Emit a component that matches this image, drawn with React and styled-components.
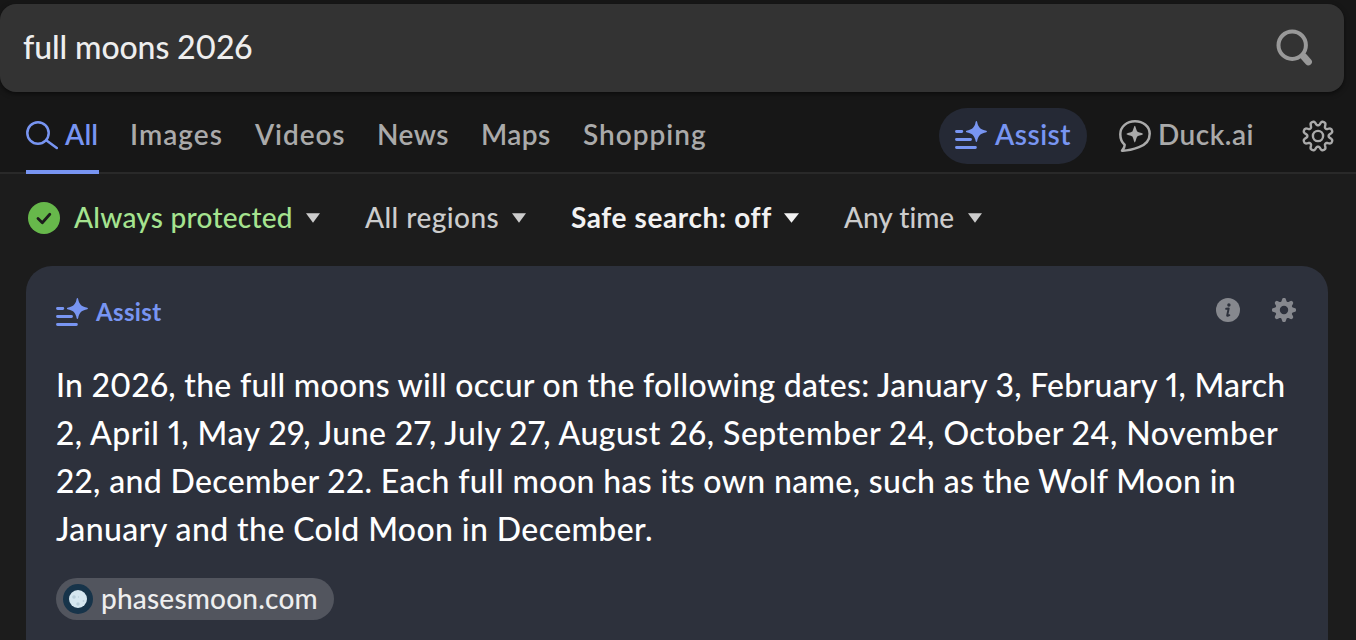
import React from 'react';
import styled, { createGlobalStyle } from 'styled-components';

const GlobalStyle = createGlobalStyle`
  *, *::before, *::after { box-sizing: border-box; }
  html, body { margin: 0; background: #1c1c1c; overflow: hidden; }
  body {
    font-family: Lato, 'Open Sans', sans-serif;
    color: #eee;
    font-kerning: normal;
    font-variant-ligatures: none;
    font-variant-numeric: proportional-nums;
  }
`;

const Page = styled.main`
  width: 1356px;
  height: 640px;
  overflow: hidden;
  display: flex;
  flex-direction: column;
  background: #1c1c1c;
`;

const Header = styled.header`
  flex: none;
  height: 174px;
  padding-top: 4px;
  background: #171717;
  border-bottom: 2px solid #292929;
`;

const SearchBar = styled.div`
  width: 1344px;
  height: 88px;
  padding: 0 30px 0 23px;
  display: flex;
  align-items: center;
  justify-content: space-between;
  background: #333;
  border-radius: 16px;
  box-shadow: 0 2px 5px rgba(0, 0, 0, 0.5);
`;

const Label = styled.span`
  flex: none;
  width: ${(p) => p.$width}px;
  white-space: nowrap;
  letter-spacing: ${(p) => p.$spacing || 0}px;
`;

const Query = styled(Label)`
  font-size: 32px;
  font-weight: 500;
  line-height: 40px;
  padding-bottom: 2px;
  color: #eee;
`;

const Nav = styled.nav`
  height: 82px;
  display: flex;
  justify-content: space-between;
  padding: 0 22px 0 26px;
  font-size: 28px;
  font-weight: 600;
  color: #aaa;
`;

const Tabs = styled.div`
  display: flex;
  gap: 32px;
`;

const Tab = styled.a`
  display: flex;
  align-items: center;
  gap: 7px;
  padding-top: 2px;
  margin-right: ${(p) => (p.$active ? '-1px' : '0')};
  color: ${(p) => (p.$active ? '#7895f2' : '#aaa')};
  box-shadow: ${(p) => (p.$active ? 'inset 0 -4px #7895f2' : 'none')};
`;

const Tools = styled.div`
  display: flex;
  align-items: center;
`;

const AssistPill = styled.div`
  width: 148px;
  height: 56px;
  margin: 6px 32px 0 0;
  padding: 0 15px 4px 16px;
  display: flex;
  align-items: center;
  gap: 8px;
  border-radius: 28px;
  color: #7895f2;
  background: #252935;
`;

const DuckLink = styled.div`
  display: flex;
  align-items: center;
  gap: 7px;
  padding-top: 2px;
  margin-right: 48px;
`;

const IconNudge = styled.span`
  display: flex;
  flex: none;
  margin-top: ${(p) => p.$top || 0}px;
  color: ${(p) => p.$color || 'inherit'};
`;

const Filters = styled.div`
  flex: none;
  height: 92px;
  padding: 0 28px 6px;
  display: flex;
  align-items: center;
  gap: 45px;
  font-size: 28px;
  font-weight: 500;
`;

const Filter = styled.div`
  display: flex;
  align-items: center;
  gap: 14px;
  color: ${(p) => p.$color};
  font-weight: ${(p) => p.$weight || 500};
`;

const Card = styled.section`
  flex: 1;
  width: 1302px;
  margin-left: 26px;
  padding: 28px 30px 0;
  border-radius: 26px 26px 0 0;
  background: #2d313c;
`;

const CardHeader = styled.div`
  height: 36px;
  display: flex;
  justify-content: space-between;
`;

const CardTitle = styled.div`
  display: flex;
  align-items: center;
  gap: 8px;
  color: #7895f2;
  font-size: 24px;
  font-weight: 700;
  line-height: 28px;
`;

const CardActions = styled.div`
  display: flex;
  gap: 32px;
  padding: 4px 2px 0 0;
`;

const Answer = styled.p`
  margin: 31px 0 25px;
  display: flex;
  flex-direction: column;
  font-size: 32px;
  font-weight: 500;
  line-height: 48px;
  color: #fff;
`;

const Source = styled.a`
  width: 278px;
  height: 42px;
  padding: 0 0 0 7px;
  display: flex;
  align-items: center;
  gap: 8px;
  border-radius: 21px;
  background: #52555e;
  color: #eee;
  font-size: 28px;
  font-weight: 500;
  line-height: 36px;
`;

const SourceLabel = styled(Label)`
  padding-bottom: 2px;
`;

function gearPath(c, mid, amp, sharp, phase) {
  const pts = [];
  for (let i = 0; i < 160; i++) {
    const a = (i / 160) * Math.PI * 2;
    const w = Math.tanh(sharp * (Math.cos(8 * a + phase) + 0.1)) / Math.tanh(sharp);
    const r = mid + amp * w;
    pts.push(`${(c + r * Math.cos(a)).toFixed(2)} ${(c + r * Math.sin(a)).toFixed(2)}`);
  }
  return `M${pts.join('L')}Z`;
}

const OutlineGear = () => (
  <svg width="32" height="32" fill="none" stroke="#aaa" strokeWidth="2.4" strokeLinejoin="round">
    <path d={gearPath(16, 12.8, 2.2, 1.7, Math.PI)} />
    <circle cx="16" cy="16" r="5.1" />
  </svg>
);

const SolidGear = () => (
  <svg width="24" height="24">
    <path fill="#86888e" fillRule="evenodd" d={gearPath(12, 10.3, 1.7, 1.3, 0) + 'M16.2 12a4.2 4.2 0 1 0-8.4 0a4.2 4.2 0 1 0 8.4 0Z'} />
  </svg>
);

const SearchIcon = () => (
  <svg width="38" height="38" fill="none" stroke="#999" strokeLinecap="round">
    <circle cx="16.2" cy="16.2" r="13.7" strokeWidth="4" />
    <path d="M28 27.9L32.4 32.8" strokeWidth="7" />
  </svg>
);

const SmallSearchIcon = () => (
  <svg width="32" height="30" fill="none" stroke="#7895f2" strokeWidth="2.5" strokeLinecap="round">
    <circle cx="12" cy="13" r="10.7" />
    <path d="M20.2 20.2L30.8 28" />
  </svg>
);

const AssistIcon = () => (
  <svg width="32" height="31" fill="none" stroke="#7895f2" strokeWidth="2.9" strokeLinecap="round">
    <path d="M1.5 11.5H6.8M1.5 19.5H15.5M1.5 27.5H20.4" />
    <path d="M21.4 1C22.1 1 22.2 2.2 22.5 3.5C23.7 7.5 25.5 9.2 29.4 10.3C31 10.7 31.9 10.9 31.9 11.5C31.9 12.1 31 12.3 29.4 12.7C25.5 13.8 23.7 15.5 22.5 19.5C22.2 20.8 22.1 22 21.4 22C20.7 22 20.6 20.8 20.3 19.5C19.1 15.5 17.3 13.8 13.4 12.7C11.8 12.3 10.9 12.1 10.9 11.5C10.9 10.9 11.8 10.7 13.4 10.3C17.3 9.2 19.1 7.5 20.3 3.5C20.6 2.2 20.7 1 21.4 1Z" fill="#7895f2" stroke="none" />
  </svg>
);

const DuckAiIcon = () => (
  <svg width="32" height="32" fill="none" stroke="#aaa" strokeWidth="2.5" strokeLinejoin="round">
    <path d="M16 1.3C24.2 1.3 30.7 6.5 30.7 13.8C30.7 20.2 26.5 24.8 20 27.2C14.4 29.4 7.2 30.8 3 30.7C2.6 30.2 6 28.5 5.6 24.8C2.7 22.2 1.3 18.5 1.3 14.3C1.3 6.5 8 1.3 16 1.3Z" />
    <path d="M15.8 5.7C16.5 5.7 16.9 8.8 18.2 11.6C19.4 12.6 24.2 13.3 24.2 14.1C24.2 14.9 19.4 15.6 18.2 16.6C16.9 19.4 16.5 22.5 15.8 22.5C15.1 22.5 14.7 19.4 13.4 16.6C12.2 15.6 7.4 14.9 7.4 14.1C7.4 13.3 12.2 12.6 13.4 11.6C14.7 8.8 15.1 5.7 15.8 5.7Z" fill="#aaa" stroke="none" />
  </svg>
);

const CheckIcon = () => (
  <svg width="32" height="32">
    <circle cx="16" cy="16" r="16" fill="#67b84b" />
    <path d="M10 16.5L14.3 20.7L21.8 12.3" fill="none" stroke="#1c1c1c" strokeWidth="2.8" strokeLinecap="round" strokeLinejoin="round" />
  </svg>
);

const Caret = ({ size = 14 }) => (
  <svg width={size} height="10" viewBox="0 0 14 10" preserveAspectRatio="none">
    <path d="M0 0.3H14L7 9.8Z" fill="currentColor" />
  </svg>
);

const InfoIcon = () => (
  <svg width="24" height="24">
    <circle cx="12" cy="12" r="12" fill="#86888e" />
    <circle cx="12.9" cy="7" r="1.7" fill="#2d313c" />
    <path d="M10.2 10.8L12.7 10.4L11.2 17.4Q11.1 18.2 13.3 17.2" fill="none" stroke="#2d313c" strokeWidth="2" strokeLinecap="round" strokeLinejoin="round" />
  </svg>
);

const MoonIcon = () => (
  <svg width="30" height="30">
    <circle cx="15" cy="15" r="15" fill="#17344a" />
    <circle cx="15" cy="15" r="9" fill="#d5e7f0" />
    <g fill="#b9cfdb">
      <circle cx="11" cy="13" r="1.8" />
      <circle cx="15" cy="20" r="1.7" />
      <circle cx="15.5" cy="13" r="0.7" />
      <circle cx="20.5" cy="17" r="0.9" />
    </g>
  </svg>
);

const tabs = [
  { text: 'Images', width: 93, spacing: 1.05 },
  { text: 'Videos', width: 90, spacing: 0.9 },
  { text: 'News', width: 72, spacing: 0.5 },
  { text: 'Maps', width: 70, spacing: 0.4 },
  { text: 'Shopping', width: 124, spacing: 1 },
];

const filters = [
  { text: 'All regions', width: 133, spacing: 0.45, color: '#ccc' },
  { text: 'Safe search: off', width: 199, spacing: 0.6, color: '#f2f2f2', weight: 700 },
  { text: 'Any time', width: 110, spacing: 0, color: '#ccc' },
];

const answer = [
  { text: 'In 2026, the full moons will occur on the following dates: January 3, February 1, March', width: 1229, spacing: 0.27 },
  { text: '2, April 1, May 29, June 27, July 27, August 26, September 24, October 24, November', width: 1221, spacing: 0.49 },
  { text: '22, and December 22. Each full moon has its own name, such as the Wolf Moon in', width: 1179, spacing: 0.36 },
  { text: 'January and the Cold Moon in December.', width: 596, spacing: 0.4 },
];

export default function App() {
  return (
    <Page>
      <GlobalStyle />
      <Header>
        <SearchBar>
          <Query $width={229} $spacing={-0.1}>full moons 2026</Query>
          <SearchIcon />
        </SearchBar>
        <Nav>
          <Tabs>
            <Tab $active>
              <IconNudge $top={2}><SmallSearchIcon /></IconNudge>
              <Label $width={34} $spacing={0.2}>All</Label>
            </Tab>
            {tabs.map((t) => (
              <Tab key={t.text}>
                <Label $width={t.width} $spacing={t.spacing}>{t.text}</Label>
              </Tab>
            ))}
          </Tabs>
          <Tools>
            <AssistPill>
              <IconNudge $top={2}><AssistIcon /></IconNudge>
              <Label $width={77} $spacing={0.5}>Assist</Label>
            </AssistPill>
            <DuckLink>
              <IconNudge $top={4}><DuckAiIcon /></IconNudge>
              <Label $width={96} $spacing={0.5}>Duck.ai</Label>
            </DuckLink>
            <IconNudge $top={6}><OutlineGear /></IconNudge>
          </Tools>
        </Nav>
      </Header>
      <Filters>
        <Filter $color="#a5e38f">
          <IconNudge $top={2}><CheckIcon /></IconNudge>
          <Label $width={218} $spacing={0.25}>Always protected</Label>
          <IconNudge $top={1} $color="#ccc"><Caret /></IconNudge>
        </Filter>
        {filters.map((f) => (
          <Filter key={f.text} $color={f.color} $weight={f.weight}>
            <Label $width={f.width} $spacing={f.spacing}>{f.text}</Label>
            <IconNudge $top={1}><Caret size={f.weight ? 15 : 14} /></IconNudge>
          </Filter>
        ))}
      </Filters>
      <Card>
        <CardHeader>
          <CardTitle>
            <AssistIcon />
            <Label $width={66} $spacing={0.35}>Assist</Label>
          </CardTitle>
          <CardActions>
            <InfoIcon />
            <SolidGear />
          </CardActions>
        </CardHeader>
        <Answer>
          {answer.map((l) => (
            <Label key={l.text} $width={l.width} $spacing={l.spacing}>{l.text}</Label>
          ))}
        </Answer>
        <Source>
          <MoonIcon />
          <SourceLabel $width={216} $spacing={0.2}>phasesmoon.com</SourceLabel>
        </Source>
      </Card>
    </Page>
  );
}
